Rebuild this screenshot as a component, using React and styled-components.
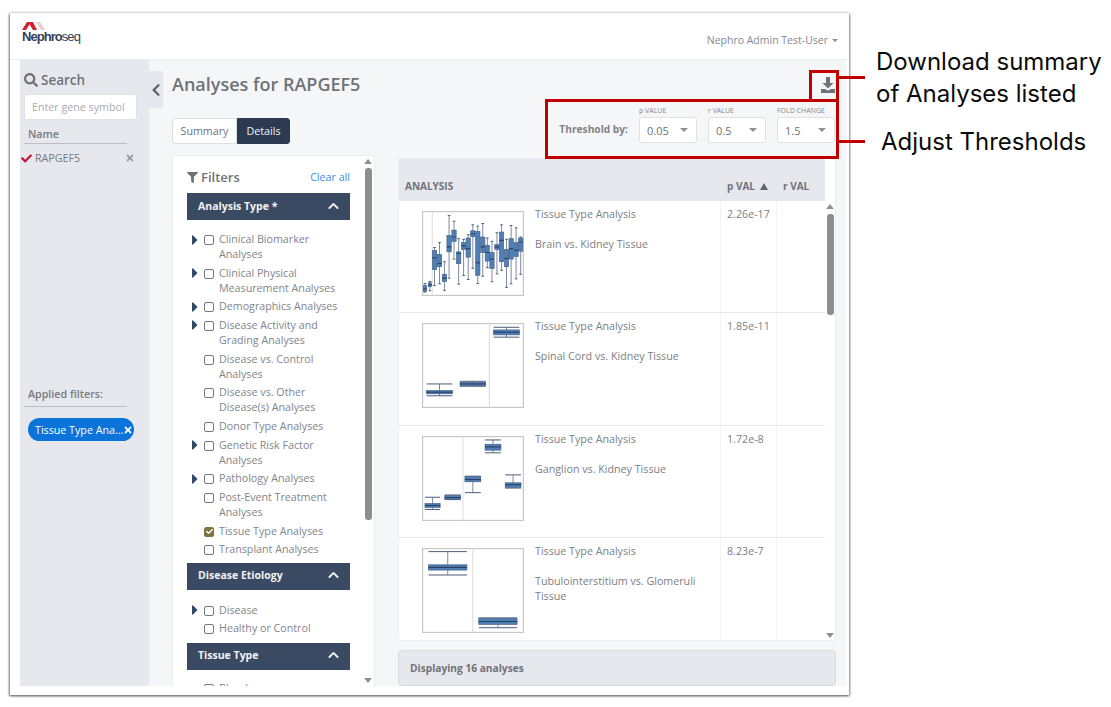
import React from "react"
import styled, { createGlobalStyle } from "styled-components"
import { FaSearch, FaFilter, FaChevronUp, FaChevronLeft, FaCheck, FaTimes, FaCaretRight } from "react-icons/fa"

const GlobalStyle = createGlobalStyle`
  html, body {
    margin: 0;
    background: white;
  }
  body {
    font-family: "Open Sans", "Liberation Sans", sans-serif;
    font-size: 10.7px;
    color: #777a80;
  }
  * {
    box-sizing: border-box;
  }
`

const Page = styled.div`
  position: relative;
  width: 1111px;
  height: 707px;
  padding: 13px 0 0 10px;
  overflow: hidden;
`

const Window = styled.div`
  display: flex;
  flex-direction: column;
  width: 839px;
  height: 682px;
  background: white;
  box-shadow: -1px 1px 2px #777, 1px 1px 2px #888, 0 -1px 2px #ddd;
`

const Header = styled.header`
  display: flex;
  flex: none;
  justify-content: space-between;
  height: 47px;
  padding: 9px 11px 0 12px;
  border-bottom: 1px solid #eceef1;
`

const LogoWrap = styled.div`
  display: flex;
  flex-direction: column;
  width: 60px;
`

const LogoName = styled.div`
  margin-top: -1px;
  font-family: "Liberation Sans", sans-serif;
  font-size: 13px;
  line-height: 15px;
  letter-spacing: -0.95px;
  color: #33415c;
  b {
    font-weight: 700;
  }
`

const UserMenu = styled.div`
  display: flex;
  align-items: center;
  gap: 4px;
  height: 18px;
  margin-top: 9px;
  font-size: 10.5px;
  color: #858990;
`

const Caret = styled.i`
  width: 0;
  height: 0;
  border-left: ${p => p.$size || 3}px solid transparent;
  border-right: ${p => p.$size || 3}px solid transparent;
  border-top: ${p => p.$size || 3}px solid #8d9096;
`

const Body = styled.div`
  display: flex;
  flex: 1;
  min-height: 0;
  padding: 0 3px 9px 10px;
`

const Sidebar = styled.aside`
  display: flex;
  flex: none;
  flex-direction: column;
  width: 129px;
  padding: 11px 12px 0 4px;
  background: #e6e8ee;
`

const SearchTitle = styled.div`
  display: flex;
  align-items: center;
  gap: 3px;
  height: 18px;
  font-size: 13.5px;
  font-weight: 600;
  color: #6f7278;
  svg {
    width: 14px;
    height: 14px;
  }
`

const GeneInput = styled.div`
  display: flex;
  align-items: center;
  height: 26px;
  margin-top: 5px;
  padding-left: 7px;
  background: white;
  border: 1px solid #e0e2e6;
  border-radius: 3px;
  color: #a9abb0;
`

const SideHeading = styled.div`
  height: ${p => p.$height}px;
  margin: ${p => p.$top}px 10px 0 0;
  padding-left: ${p => p.$indent}px;
  border-bottom: 1px solid #bcbec4;
  font-weight: 600;
  line-height: 14px;
  color: #777a80;
`

const GeneRow = styled.div`
  display: flex;
  align-items: center;
  height: 16px;
  margin: 6px 0 0 -3px;
  svg:first-child {
    width: 11px;
    height: 11px;
    color: #c4122f;
  }
  span {
    flex: 1;
    margin-left: 3px;
  }
  svg:last-child {
    width: 10px;
    height: 10px;
    margin-right: 2px;
    color: #9a9ca2;
  }
`

const Spacer = styled.div`
  flex: 1;
`

const Pill = styled.div`
  display: flex;
  align-items: center;
  justify-content: space-between;
  width: 106px;
  height: 23px;
  margin: 11px 0 0 4px;
  padding: 0 4px 0 7px;
  background: #0a74da;
  border-radius: 12px;
  color: white;
  white-space: nowrap;
  svg {
    flex: none;
    width: 10px;
    height: 10px;
  }
`

const Main = styled.main`
  position: relative;
  display: flex;
  flex: 1;
  flex-direction: column;
  min-width: 0;
  padding: 11px 10px 0 23px;
  background: #f5f6f8;
`

const CollapseTab = styled.div`
  position: absolute;
  top: 11px;
  left: 0;
  display: flex;
  align-items: center;
  justify-content: center;
  width: 14px;
  height: 37px;
  background: #e6e8ee;
  color: #5c6068;
  svg {
    width: 12px;
    height: 14px;
  }
`

const TitleRow = styled.div`
  display: flex;
  flex: none;
  justify-content: space-between;
  height: 28px;
`

const Title = styled.h1`
  margin: 0;
  font-size: 18px;
  font-weight: 600;
  line-height: 26px;
  color: #6f7278;
`

const DownloadButton = styled.svg`
  width: 14px;
  height: 16px;
  margin: 6px 1px 0 0;
  color: #6f7278;
`

const ToolRow = styled.div`
  display: flex;
  flex: none;
  align-items: flex-end;
  justify-content: space-between;
  height: 45px;
  margin-bottom: 11px;
`

const Tabs = styled.div`
  display: flex;
  height: 26px;
`

const Tab = styled.div`
  display: flex;
  align-items: center;
  justify-content: center;
  width: ${p => p.$width}px;
  background: ${p => (p.$active ? "#2b3a50" : "white")};
  border: 1px solid ${p => (p.$active ? "#2b3a50" : "#dcdee2")};
  border-radius: ${p => (p.$active ? "0 3px 3px 0" : "3px 0 0 3px")};
  color: ${p => (p.$active ? "#f2f3f5" : "#6f7278")};
`

const Thresholds = styled.div`
  display: flex;
  align-items: flex-end;
  gap: 11px;
  margin: 0 1px 1px 0;
`

const ThresholdLabel = styled.div`
  height: 26px;
  font-size: 10.2px;
  font-weight: 700;
  line-height: 24px;
  color: #80838a;
`

const Field = styled.div`
  display: flex;
  flex-direction: column;
  width: 58px;
`

const FieldLabel = styled.div`
  height: 12px;
  font-size: 7px;
  line-height: 12px;
  white-space: nowrap;
  color: #85888e;
`

const Select = styled.div`
  display: flex;
  align-items: center;
  justify-content: space-between;
  height: 26px;
  padding: 0 8px 0 7px;
  background: white;
  border: 1px solid #dfe1e5;
  border-radius: 3px;
  font-size: 11px;
  color: #6f7278;
`

const Columns = styled.div`
  display: flex;
  flex: 1;
  gap: 23px;
  min-height: 0;
`

const FilterCard = styled.section`
  display: flex;
  flex: none;
  width: 203px;
  background: white;
  border: 1px solid #eceef1;
  border-radius: 3px 3px 0 0;
  border-bottom: 0;
  overflow: hidden;
`

const FilterBody = styled.div`
  flex: 1;
  min-width: 0;
  padding: 12px 0 0 14px;
  overflow: hidden;
`

const FilterTitle = styled.div`
  display: flex;
  align-items: center;
  justify-content: space-between;
  width: 163px;
  height: 18px;
  margin-bottom: 7px;
  font-size: 13px;
  font-weight: 600;
  color: #6f7278;
  span {
    display: flex;
    align-items: center;
    gap: 3px;
  }
  svg {
    width: 11px;
    height: 11px;
  }
  a {
    font-size: 10.7px;
    font-weight: 400;
    color: #3b8fe8;
  }
`

const GroupHeader = styled.div`
  display: flex;
  align-items: center;
  justify-content: space-between;
  width: 163px;
  height: 27px;
  padding: 0 10px 2px 11px;
  background: #3b4a63;
  font-size: 10.5px;
  font-weight: 700;
  color: #f1f2f4;
  svg {
    width: 13px;
    height: 12px;
  }
`

const FilterList = styled.div`
  display: flex;
  flex-direction: column;
  gap: 3.67px;
  width: 163px;
  padding: ${p => p.$top}px 0 ${p => p.$bottom}px 5px;
`

const FilterRow = styled.div`
  display: flex;
  align-items: flex-start;
  line-height: 15px;
  color: #82858c;
`

const Arrow = styled.div`
  display: flex;
  flex: none;
  align-items: center;
  width: 12px;
  height: 15px;
  color: #33496b;
  svg {
    flex: none;
    width: 14px;
    height: 16px;
    margin-left: -4px;
  }
`

const CheckBox = styled.div`
  display: flex;
  flex: none;
  align-items: center;
  justify-content: center;
  width: 10px;
  height: 10px;
  margin: 3px 5px 0 0;
  background: ${p => (p.$checked ? "#7d7440" : "white")};
  border: 1px solid ${p => (p.$checked ? "#7d7440" : "#75787e")};
  border-radius: 2px;
  color: white;
  svg {
    width: 7px;
    height: 7px;
  }
`

const ScrollTrack = styled.div`
  display: flex;
  flex: none;
  flex-direction: column;
  align-items: center;
  width: 10px;
  margin-right: ${p => p.$right || 0}px;
`

const ScrollArrow = styled.i`
  flex: none;
  width: 0;
  height: 0;
  margin-top: ${p => p.$top || 0}px;
  border-left: 4px solid transparent;
  border-right: 4px solid transparent;
  border-${p => (p.$down ? "top" : "bottom")}: 5px solid #909090;
`

const ScrollThumb = styled.div`
  flex: none;
  width: 7px;
  height: ${p => p.$height}px;
  margin-top: ${p => p.$top}px;
  background: #8e8e8e;
  border-radius: 3px;
`

const RightColumn = styled.div`
  display: flex;
  flex: 1;
  flex-direction: column;
  gap: 9px;
  min-width: 0;
  padding-top: 3px;
`

const TablePanel = styled.section`
  display: flex;
  flex: 1;
  min-height: 0;
  background: white;
  border: 1px solid #eceef1;
  border-radius: 3px;
  overflow: hidden;
`

const TableBody = styled.div`
  flex: 1;
  min-width: 0;
  overflow: hidden;
`

const HeadRow = styled.div`
  display: grid;
  grid-template-columns: 322px 56px 1fr;
  height: 42px;
  background: #e6e8ee;
  font-size: 10px;
  font-weight: 700;
  color: #6f7278;
  div {
    display: flex;
    align-items: flex-end;
    gap: 5px;
    padding: 0 0 8px 6px;
  }
`

const SortArrow = styled.i`
  width: 0;
  height: 0;
  margin-bottom: 3px;
  border-left: 4px solid transparent;
  border-right: 4px solid transparent;
  border-bottom: 7px solid #62666d;
`

const Row = styled.div`
  display: grid;
  grid-template-columns: 322px 56px 1fr;
  height: 112.4px;
  border-bottom: 1px solid #e8e9ec;
`

const AnalysisCell = styled.div`
  display: flex;
  gap: 11px;
  padding: 10px 0 0 23px;
  border-right: 1px solid #f3f3f5;
  svg {
    flex: none;
    width: 102px;
    height: 85px;
  }
`

const AnalysisText = styled.div`
  margin-top: -4px;
  line-height: 15px;
  color: #7d8086;
  p {
    margin: 0 0 15px;
  }
`

const PCell = styled.div`
  padding: 6px 0 0 6px;
  line-height: 15px;
  border-right: 1px solid #f3f3f5;
  color: #7d8086;
`

const EmptyCell = styled.div``

const Footer = styled.div`
  display: flex;
  flex: none;
  align-items: center;
  height: 36px;
  padding-left: 11px;
  background: #e6e8ee;
  border: 1px solid #d8dade;
  border-radius: 4px;
  font-size: 10.2px;
  font-weight: 700;
  color: #6f7278;
`

const AnnoBox = styled.div`
  position: absolute;
  border: 3px solid #c00000;
  pointer-events: none;
`

const DownloadBox = styled(AnnoBox)`
  top: 70px;
  left: 809px;
  width: 30px;
  height: 32px;
`

const ThresholdBox = styled(AnnoBox)`
  top: 99px;
  left: 545px;
  width: 294px;
  height: 60px;
`

const Leader = styled.div`
  position: absolute;
  top: ${p => p.$top}px;
  left: 838px;
  width: 27px;
  height: 3px;
  background: #c00000;
`

const Note = styled.div`
  position: absolute;
  top: ${p => p.$top}px;
  left: ${p => p.$left}px;
  font-family: "Inter", "Liberation Sans", sans-serif;
  font-size: 24px;
  line-height: 32px;
  white-space: nowrap;
  color: #0b0b0b;
`

const filterGroups = [
  {
    title: "Analysis Type *",
    top: 12,
    bottom: 5.5,
    items: [
      { label: ["Clinical Biomarker", "Analyses"], arrow: true },
      { label: ["Clinical Physical", "Measurement Analyses"], arrow: true },
      { label: ["Demographics Analyses"], arrow: true },
      { label: ["Disease Activity and", "Grading Analyses"], arrow: true },
      { label: ["Disease vs. Control", "Analyses"] },
      { label: ["Disease vs. Other", "Disease(s) Analyses"] },
      { label: ["Donor Type Analyses"] },
      { label: ["Genetic Risk Factor", "Analyses"], arrow: true },
      { label: ["Pathology Analyses"], arrow: true },
      { label: ["Post-Event Treatment", "Analyses"] },
      { label: ["Tissue Type Analyses"], checked: true },
      { label: ["Transplant Analyses"] },
    ],
  },
  {
    title: "Disease Etiology",
    top: 13,
    bottom: 6.5,
    items: [
      { label: ["Disease"], arrow: true },
      { label: ["Healthy or Control"] },
    ],
  },
  {
    title: "Tissue Type",
    top: 11,
    bottom: 5.5,
    items: [{ label: ["Blood"] }],
  },
]

// chart numbers: [centre, box width, cap width, whisker top, box top, median, box bottom, whisker bottom]
const brainBoxes = [
  [73, 10, 8, 266, 272, 282, 290, 292], [88, 10, 8, 260, 264, 270, 275, 288],
  [102, 13, 8, 157, 166, 188, 224, 272], [117, 13, 8, 142, 178, 205, 215, 267],
  [132, 13, 8, 200, 238, 250, 260, 287], [146, 13, 8, 60, 120, 155, 170, 250],
  [161, 13, 8, 77, 104, 125, 138, 192], [175, 13, 8, 130, 170, 175, 206, 268],
  [190, 13, 8, 132, 142, 152, 163, 242], [204, 13, 8, 118, 128, 160, 186, 254],
  [218, 13, 8, 88, 106, 115, 124, 220], [233, 13, 8, 92, 108, 203, 241, 266],
  [248, 13, 8, 84, 125, 155, 172, 244], [262, 13, 8, 128, 150, 172, 198, 218],
  [276, 13, 8, 138, 172, 192, 220, 261], [291, 13, 8, 112, 148, 155, 163, 237],
  [305, 13, 8, 88, 110, 135, 200, 226], [320, 13, 8, 132, 163, 190, 215, 278],
  [334, 13, 8, 90, 130, 160, 192, 267], [349, 13, 8, 97, 142, 165, 184, 252],
  [363, 13, 8, 125, 128, 140, 168, 238],
]

const analyses = [
  {
    name: ["Brain vs. Kidney Tissue"],
    p: "2.26e-17",
    top: 48,
    divider: 95,
    boxes: brainBoxes,
  },
  {
    name: ["Spinal Cord vs. Kidney Tissue"],
    p: "1.85e-11",
    top: 387,
    divider: 268,
    boxes: [
      [117, 78, 78, 570, 590, 595, 600, 606],
      [218, 78, 78, 562, 565, 570, 575, 577],
      [320, 78, 78, 398, 406, 413, 421, 428],
    ],
  },
  {
    name: ["Ganglion vs. Kidney Tissue"],
    p: "1.72e-8",
    top: 35,
    divider: 188,
    boxes: [
      [96, 46, 46, 219, 238, 244, 250, 256],
      [157, 48, 48, 212, 214, 220, 225, 226],
      [218, 48, 48, 155, 156, 165, 172, 205],
      [279, 48, 48, 45, 58, 66, 76, 84],
      [340, 48, 48, 151, 175, 181, 189, 191],
    ],
  },
  {
    name: ["Tubulointerstitium vs. Glomeruli", "Tissue"],
    p: "8.23e-7",
    top: 372,
    divider: 218,
    boxes: [
      [142, 116, 116, 381, 421, 429, 437, 452],
      [294, 116, 116, 582, 584, 593, 602, 612],
    ],
  },
]

const BoxPlot = ({ top, divider, boxes }) => (
  <svg viewBox={`64 ${top - 2} 309 258`} preserveAspectRatio="none">
    <rect x="66" y={top} width="305" height="254" fill="white" stroke="#bdbdbd" strokeWidth="3" />
    <line x1={divider} x2={divider} y1={top} y2={top + 254} stroke="#dcdcdc" strokeWidth="3" />
    {boxes.map(([x, w, cap, wTop, q1, med, q3, wBot]) => (
      <g key={x}>
        <line x1={x} x2={x} y1={wTop} y2={wBot} stroke="#62718b" strokeWidth="2.5" />
        <line x1={x - cap / 2} x2={x + cap / 2} y1={wTop} y2={wTop} stroke="#4a5a76" strokeWidth="3" />
        <line x1={x - cap / 2} x2={x + cap / 2} y1={wBot} y2={wBot} stroke="#4a5a76" strokeWidth="3" />
        <rect x={x - w / 2} y={q1} width={w} height={q3 - q1} fill="#4f7fb5" stroke="#44618a" strokeWidth="2" />
        <line x1={x - w / 2} x2={x + w / 2} y1={med} y2={med} stroke="#2a4166" strokeWidth="3.5" />
      </g>
    ))}
  </svg>
)

const Logo = () => (
  <svg width="24" height="8" viewBox="0 0 24 8">
    <polygon points="0,8 5,0 9,0 4,8" fill="#d3202a" />
    <polygon points="6,0 11,0 15,8 11,8" fill="#d3202a" />
    <polygon points="14,0 18,0 23,8 19,8" fill="#f2c9c9" />
  </svg>
)

const FilterItem = ({ label, arrow, checked }) => (
  <FilterRow>
    <Arrow>{arrow && <FaCaretRight />}</Arrow>
    <CheckBox $checked={checked}>{checked && <FaCheck />}</CheckBox>
    <div>
      {label.map(line => (
        <div key={line}>{line}</div>
      ))}
    </div>
  </FilterRow>
)

const thresholds = [
  { label: "p VALUE", value: "0.05" },
  { label: "r VALUE", value: "0.5" },
  { label: "FOLD CHANGE", value: "1.5" },
]

const App = () => (
  <Page>
    <GlobalStyle />
    <Window>
      <Header>
        <LogoWrap>
          <Logo />
          <LogoName>
            <b>Nephro</b>seq
          </LogoName>
        </LogoWrap>
        <UserMenu>
          Nephro Admin Test-User <Caret />
        </UserMenu>
      </Header>
      <Body>
        <Sidebar>
          <SearchTitle>
            <FaSearch /> Search
          </SearchTitle>
          <GeneInput>Enter gene symbol</GeneInput>
          <SideHeading $top={7} $height={17} $indent={4}>Name</SideHeading>
          <GeneRow>
            <FaCheck />
            <span>RAPGEF5</span>
            <FaTimes />
          </GeneRow>
          <SideHeading $top={221} $height={20} $indent={4}>Applied filters:</SideHeading>
          <Pill>
            Tissue Type Ana...
            <FaTimes />
          </Pill>
          <Spacer />
        </Sidebar>
        <Main>
          <CollapseTab>
            <FaChevronLeft />
          </CollapseTab>
          <TitleRow>
            <Title>Analyses for RAPGEF5</Title>
            <DownloadButton viewBox="0 0 14 16">
              <path fill="currentColor" d="M5 0h4v6h3.500L7 11.500 1.500 6H5z" />
              <path fill="currentColor" d="M0 12h4l3 1.500L10 12h4v4H0z" />
            </DownloadButton>
          </TitleRow>
          <ToolRow>
            <Tabs>
              <Tab $width={65}>Summary</Tab>
              <Tab $width={53} $active>Details</Tab>
            </Tabs>
            <Thresholds>
              <ThresholdLabel>Threshold by:</ThresholdLabel>
              {thresholds.map(({ label, value }) => (
                <Field key={label}>
                  <FieldLabel>{label}</FieldLabel>
                  <Select>
                    {value}
                    <Caret $size={4} />
                  </Select>
                </Field>
              ))}
            </Thresholds>
          </ToolRow>
          <Columns>
            <FilterCard>
              <FilterBody>
                <FilterTitle>
                  <span><FaFilter /> Filters</span>
                  <a>Clear all</a>
                </FilterTitle>
                {filterGroups.map(({ title, top, bottom, items }) => (
                  <div key={title}>
                    <GroupHeader>
                      {title}
                      <FaChevronUp />
                    </GroupHeader>
                    <FilterList $top={top} $bottom={bottom}>
                      {items.map(item => (
                        <FilterItem key={item.label[0]} {...item} />
                      ))}
                    </FilterList>
                  </div>
                ))}
              </FilterBody>
              <ScrollTrack $right={1}>
                <ScrollArrow $top={3} />
                <ScrollThumb $top={4} $height={352} />
                <ScrollArrow $down $top={158} />
              </ScrollTrack>
            </FilterCard>
            <RightColumn>
              <TablePanel>
                <TableBody>
                  <HeadRow>
                    <div>ANALYSIS</div>
                    <div>p VAL <SortArrow /></div>
                    <div>r VAL</div>
                  </HeadRow>
                  {analyses.map(({ name, p, top, divider, boxes }) => (
                    <Row key={p}>
                      <AnalysisCell>
                        <BoxPlot top={top} divider={divider} boxes={boxes} />
                        <AnalysisText>
                          <p>Tissue Type Analysis</p>
                          {name.map(line => (
                            <div key={line}>{line}</div>
                          ))}
                        </AnalysisText>
                      </AnalysisCell>
                      <PCell>{p}</PCell>
                      <EmptyCell />
                    </Row>
                  ))}
                </TableBody>
                <ScrollTrack>
                  <ScrollArrow $top={45} />
                  <ScrollThumb $top={5} $height={101} />
                  <ScrollArrow $down $top={318} />
                </ScrollTrack>
              </TablePanel>
              <Footer>Displaying 16 analyses</Footer>
            </RightColumn>
          </Columns>
        </Main>
      </Body>
    </Window>
    <DownloadBox />
    <ThresholdBox />
    <Leader $top={76} />
    <Leader $top={140} />
    <Note $top={46} $left={876}>Download summary</Note>
    <Note $top={78} $left={876}>of Analyses listed</Note>
    <Note $top={126} $left={881}>Adjust Thresholds</Note>
  </Page>
)

export default App
